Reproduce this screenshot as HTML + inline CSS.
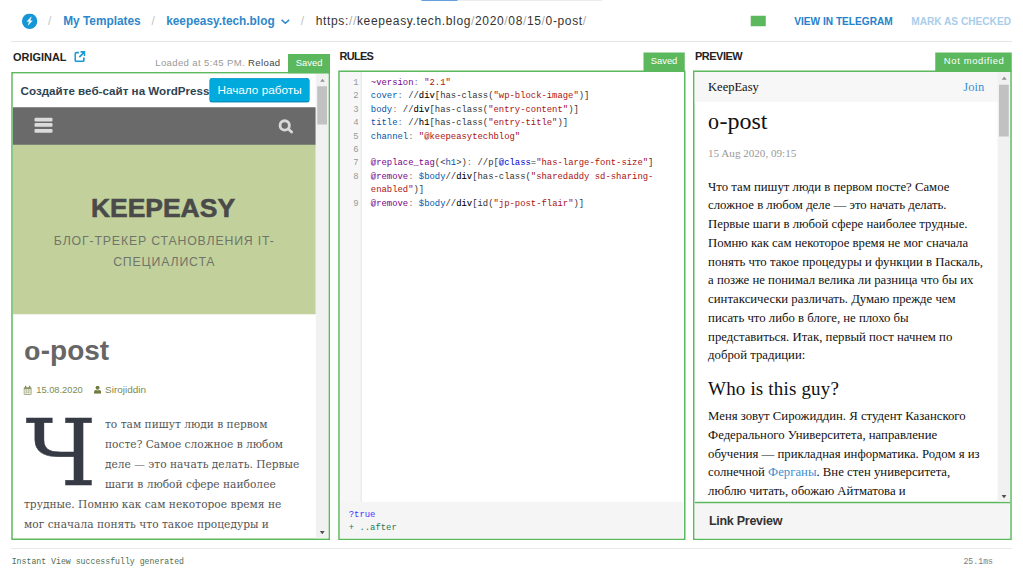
<!DOCTYPE html>
<html><head><meta charset="utf-8"><title>Instant View Editor</title>
<style>
html,body{margin:0;padding:0;background:#fff;overflow:hidden}
body{width:1023px;height:575px;position:relative}
#s{position:absolute;left:0;top:0;width:1364px;height:767px;transform:scale(0.75);transform-origin:0 0;font-family:"Liberation Sans",sans-serif;color:#222;overflow:hidden}
#s *{box-sizing:border-box}
.a{position:absolute;white-space:nowrap}
.hdrline{left:15px;top:54.6px;width:1334px;height:1.2px;background:#dcdcdc}
.bc{font-size:16px;line-height:20px;top:17.6px}
.bc.b{font-weight:bold;color:#2e87ca;font-size:15.8px}
.sep{color:#c4c4c4;font-size:16px;line-height:20px;top:17.6px}
.panel{border:2px solid #5cb85c;background:#fff;background-clip:padding-box;overflow:hidden}
.lbl{font-weight:bold;font-size:14.6px;line-height:16px;color:#222}
.badge{background:#5cb85c;color:#fff;font-size:13px;line-height:16px;text-align:center}
.ln{left:0;width:25.6px;text-align:right;font-family:"Liberation Mono",monospace;font-size:11.85px;line-height:18px;color:#999}
.cl{left:41.9px;font-family:"Liberation Mono",monospace;font-size:11.85px;line-height:18px;color:#333}
.cl b{color:#000;font-weight:normal;-webkit-text-stroke:0.12px #000}
.k{color:#770088}.v{color:#0055aa}.s{color:#aa1111}.o{color:#777}.at{color:#0000cc}
.iv{font-family:"Liberation Serif",serif;color:#111}
</style></head><body>
<div id="s">
<!-- header -->
<div class="a" style="left:562px;top:0;width:241px;height:1.3px;background:#e6e6e6"></div>
<div class="a" style="left:562px;top:0;width:48.2px;height:1.3px;background:#3a87d6"></div>
<svg class="a" style="left:29.45px;top:18.45px" width="21" height="21" viewBox="0 0 21 21"><circle cx="10.5" cy="10.4" r="10.3" fill="#1596d6"/><path d="M12.7 4.3 L6.9 10.8 H10.1 L8.5 15.8 L14.1 9.6 H11.1 Z" fill="#fff" stroke="#fff" stroke-width="0.5" stroke-linejoin="round"/></svg>
<div class="a sep" style="left:64px">/</div>
<div class="a bc b" id="bc1" style="left:84.3px">My Templates</div>
<div class="a sep" style="left:202px">/</div>
<div class="a bc b" id="bc2" style="left:221.6px">keepeasy.tech.blog</div>
<svg class="a" style="left:374px;top:25px" width="13" height="8" viewBox="0 0 13 8"><path d="M1.5 1.5 L6.5 6 L11.5 1.5" fill="none" stroke="#2e87ca" stroke-width="2"/></svg>
<div class="a sep" style="left:401px">/</div>
<div class="a bc" id="url" style="left:421px;color:#333;letter-spacing:0.86px">https:<span style="color:#aaa">//</span>keepeasy.tech.blog<span style="color:#aaa">/</span>2020<span style="color:#aaa">/</span>08<span style="color:#aaa">/</span>15<span style="color:#aaa">/</span>0-post<span style="color:#aaa">/</span></div>
<div class="a" style="left:1000.5px;top:21.3px;width:20px;height:14px;background:#5cb85c"></div>
<div class="a" style="left:1059px;top:20.3px;font-size:13.5px;line-height:18px;font-weight:bold;color:#2481cc">VIEW IN TELEGRAM</div>
<div class="a" style="left:1215px;top:20.3px;font-size:13.5px;line-height:18px;font-weight:bold;color:#a8cdea">MARK AS CHECKED</div>
<div class="a hdrline"></div>

<!-- labels -->
<div class="a lbl" id="l1" style="left:17.3px;top:67.8px">ORIGINAL</div>
<div class="a lbl" id="l2" style="left:452.6px;top:67.3px;letter-spacing:-0.9px">RULES</div>
<div class="a lbl" id="l3" style="left:926.5px;top:67.3px;letter-spacing:-0.6px">PREVIEW</div>

<div class="a badge" id="b1" style="left:384.3px;top:72px;width:55.7px;height:26px;padding-top:3.5px;font-size:12.5px">Saved</div>
<div class="a badge" id="b2" style="left:857.5px;top:69.7px;width:55.8px;height:26px;padding-top:3.3px;font-size:12.5px">Saved</div>
<div class="a badge" id="b3" style="left:1247px;top:69.7px;width:101.7px;height:26px;padding-top:3.3px;font-size:12.6px;letter-spacing:0.85px;padding-left:2px">Not modified</div>
<div class="a" id="ld" style="left:207px;top:75.6px;font-size:12.7px;line-height:16px;color:#999;letter-spacing:0.5px">Loaded at 5:45 PM. <span style="color:#444">Reload</span></div>
<svg class="a" id="ext" style="left:98.7px;top:67.6px" width="15" height="15" viewBox="0 0 15 15"><path d="M6.2 2.2 H2.8 Q1.2 2.2 1.2 3.8 V12.2 Q1.2 13.8 2.8 13.8 H11.2 Q12.8 13.8 12.8 12.2 V8.8" fill="none" stroke="#1a9ad7" stroke-width="2.3"/><path d="M8.4 1.2 H13.8 V6.6 M13.4 1.6 L6.8 8.2" fill="none" stroke="#1a9ad7" stroke-width="2.3"/></svg>
<!-- panels -->
<div class="a panel" id="p1" style="left:15.3px;top:96.4px;width:424.7px;height:624px">
<div class="a" style="left:0;top:0;width:404px;height:45.2px;background:#fff"></div>
<div class="a" id="wpt" style="left:10.2px;top:13px;font-size:15.5px;line-height:20px;font-weight:bold;color:#2e4453">Создайте веб-сайт на WordPress</div>
<div class="a" id="wpb" style="left:261.5px;top:5.3px;width:134.5px;height:33.5px;background:#00aadc;border-radius:4px;border:1px solid #0090c4;border-bottom:2px solid #0087b8;color:#fff;font-size:15.7px;line-height:30px;text-align:center">Начало работы</div>
<div class="a" style="left:0;top:45px;width:404px;height:50.2px;background:#6a6a6a"></div>
<div class="a" style="left:28.3px;top:58.4px;width:24.6px;height:5.1px;border-radius:1.5px;background:#dbdbdb"></div>
<div class="a" style="left:28.3px;top:65.9px;width:24.6px;height:5.1px;border-radius:1.5px;background:#dbdbdb"></div>
<div class="a" style="left:28.3px;top:73.5px;width:24.6px;height:5.1px;border-radius:1.5px;background:#dbdbdb"></div>
<svg class="a" style="left:352px;top:58.6px" width="24" height="24" viewBox="0 0 24 24"><circle cx="10.6" cy="10.2" r="6.2" fill="none" stroke="#d8d8d8" stroke-width="3.8"/><path d="M15.4 15 L19.8 19" stroke="#d8d8d8" stroke-width="3.9" stroke-linecap="round"/></svg>
<div class="a" style="left:0;top:94.7px;width:404px;height:225.7px;background:#c2d19b"></div>
<div class="a" id="ke" style="left:-2px;top:158.9px;width:404px;text-align:center;font-size:35.3px;line-height:40px;font-weight:bold;color:#4a4a4a;letter-spacing:0;-webkit-text-stroke:0.8px #4a4a4a">KEEPEASY</div>
<div class="a" id="sub" style="left:-0.3px;top:209.6px;width:404px;text-align:center;font-size:16.4px;line-height:27.5px;color:#70746a;letter-spacing:1.12px">БЛОГ-ТРЕКЕР СТАНОВЛЕНИЯ IT-<br>СПЕЦИАЛИСТА</div>
<div class="a" id="pt" style="left:14.5px;top:347px;font-size:37.3px;line-height:44px;font-weight:bold;color:#666"><span id="z0" style="display:inline-block;font-size:27.4px;transform:scaleX(1.45);transform-origin:0 100%;width:22.6px">0</span>-post</div>
<div class="a" id="meta" style="left:31px;top:414px;font-size:12.4px;line-height:16px;color:#7d8b4e">15.08.2020</div>
<div class="a" id="meta2" style="left:122.8px;top:414px;font-size:13.3px;line-height:16px;color:#7d8b4e">Sirojiddin</div>
<svg class="a" style="left:14px;top:415.6px" width="11.6" height="13" viewBox="0 0 12 13"><rect x="0.6" y="2.1" width="10.8" height="10.3" rx="1" fill="#8d9964"/><path d="M1.6 5 H10.4 V11.4 H1.6 Z" fill="#f2f4ec"/><path d="M4.5 5 V11.4 M7.5 5 V11.4 M1.6 7.1 H10.4 M1.6 9.3 H10.4" stroke="#a9b28a" stroke-width="0.7"/><path d="M3.3 0.6 V3 M8.7 0.6 V3" stroke="#7d8b4e" stroke-width="1.7" stroke-linecap="round"/></svg>
<svg class="a" style="left:107.6px;top:415.6px" width="10.2" height="11.4" viewBox="0 0 11 12"><circle cx="5.5" cy="3.1" r="2.9" fill="#6f7c40"/><path d="M0.4 11.6 V9.2 Q0.4 6.4 3.2 6.2 Q5.5 7.6 7.8 6.2 Q10.6 6.4 10.6 9.2 V11.6 Z" fill="#6f7c40"/></svg>
<div class="a" id="dc" style="left:16.7px;top:431.8px;transform:scaleX(1.0);transform-origin:0 0;font-family:'DejaVu Serif','Liberation Serif',serif;font-size:122px;line-height:150px;color:#353a44;-webkit-text-stroke:0.6px #353a44">Ч</div>
<div class="a" id="para" style="left:14.7px;top:453.3px;font-family:'DejaVu Serif','Liberation Serif',serif;font-size:14.2px;line-height:26.9px;color:#555"><span style="margin-left:108px">то там пишут люди в первом</span><br><span style="margin-left:108px">посте? Самое сложное в любом</span><br><span style="margin-left:108px">деле — это начать делать. Первые</span><br><span style="margin-left:108px">шаги в любой сфере наиболее</span><br>трудные. Помню как сам некоторое время не<br>мог сначала понять что такое процедуры и</div>
<!-- scrollbar -->
<div class="a" style="left:404px;top:0;width:16.7px;height:620px;background:#f1f1f1"></div>
<div class="a" style="left:405.9px;top:16.8px;width:12.7px;height:51.2px;background:#c1c1c1"></div>
<svg class="a" style="left:408.4px;top:6.6px" width="8" height="4.4" viewBox="0 0 9 6"><path d="M0 6 L4.5 0 L9 6 Z" fill="#8e9196"/></svg>
<svg class="a" style="left:408.8px;top:609.2px" width="7.4" height="4.4" viewBox="0 0 9 6"><path d="M0 0 L4.5 6 L9 0 Z" fill="#505050"/></svg>
</div>
<div class="a panel" id="p2" style="left:450.6px;top:93.7px;width:463px;height:626.7px">
<div class="a" style="left:0;top:0;width:29.8px;height:574px;background:#f7f7f7;border-right:1.2px solid #ddd"></div>
<div class="a ln" style="top:5.20px">1</div><div class="a cl" style="top:5.20px"><span class="k">~version</span><span class="o">:</span> <span class="s">"2.1"</span></div>
<div class="a ln" style="top:23.12px">2</div><div class="a cl" style="top:23.12px"><span class="v">cover</span><span class="o">:</span> //<b>div</b>[has-class(<span class="s">"wp-block-image"</span>)]</div>
<div class="a ln" style="top:41.04px">3</div><div class="a cl" style="top:41.04px"><span class="v">body</span><span class="o">:</span> //<b>div</b>[has-class(<span class="s">"entry-content"</span>)]</div>
<div class="a ln" style="top:58.96px">4</div><div class="a cl" style="top:58.96px"><span class="v">title</span><span class="o">:</span> //<b>h1</b>[has-class(<span class="s">"entry-title"</span>)]</div>
<div class="a ln" style="top:76.88px">5</div><div class="a cl" style="top:76.88px"><span class="v">channel</span><span class="o">:</span> <span class="s">"@keepeasytechblog"</span></div>
<div class="a ln" style="top:94.80px">6</div><div class="a cl" style="top:94.80px"></div>
<div class="a ln" style="top:112.72px">7</div><div class="a cl" style="top:112.72px"><span class="k">@replace_tag</span>(&lt;<span class="v">h1</span>&gt;)<span class="o">:</span> //p[<span class="at">@class</span>=<span class="s">"has-large-font-size"</span>]</div>
<div class="a ln" style="top:130.64px">8</div><div class="a cl" style="top:130.64px"><span class="k">@remove</span><span class="o">:</span> <span class="v">$body</span>//<b>div</b>[has-class(<span class="s">"sharedaddy sd-sharing-</span></div>
<div class="a cl" style="top:148.56px"><span class="s">enabled"</span>)]</div>
<div class="a ln" style="top:166.48px">9</div><div class="a cl" style="top:166.48px"><span class="k">@remove</span><span class="o">:</span> <span class="v">$body</span>//<b>div</b>[id(<span class="s">"jp-post-flair"</span>)]</div>
<div class="a" id="dbg" style="left:0;top:573.5px;width:458.7px;height:50px;background:#f5f5f5"></div>
<div class="a cl" id="d1" style="left:12.4px;top:581.5px;color:#3a3aff">?true</div>
<div class="a cl" id="d2" style="left:12.4px;top:599.5px;color:#1a7a55">+ ..after</div>
</div>
<div class="a panel" id="p3" style="left:924px;top:93.7px;width:424.7px;height:626.7px">
<div class="a" style="left:0;top:0;width:405px;height:40.4px;background:#f7f7f7"></div>
<div class="a iv" id="ivc" style="left:18.1px;top:9.9px;font-size:16.7px;line-height:20px">KeepEasy</div>
<div class="a iv" id="ivj" style="left:358.4px;top:9.9px;font-size:16.7px;line-height:20px;color:#3a8fd0">Join</div>
<div class="a iv" id="ivt" style="left:18.1px;top:45.2px;font-size:32px;line-height:40px"><span id="z1" style="display:inline-block;font-size:22.6px;transform:scaleX(1.3);transform-origin:0 100%;width:15.2px">0</span>-post</div>
<div class="a iv" id="ivd" style="left:18.1px;top:99px;font-size:14.8px;line-height:18px;color:#999">15 Aug 2020, 09:15</div>
<div class="a iv" id="ivb1" style="left:18.1px;top:140px;font-size:17px;line-height:25px">Что там пишут люди в первом посте? Самое<br>сложное в любом деле — это начать делать.<br>Первые шаги в любой сфере наиболее трудные.<br>Помню как сам некоторое время не мог сначала<br>понять что такое процедуры и функции в Паскаль,<br>а позже не понимал велика ли разница что бы их<br>синтаксически различать. Думаю прежде чем<br>писать что либо в блоге, не плохо бы<br>представиться. Итак, первый пост начнем по<br>доброй традиции:</div>
<div class="a iv" id="ivh" style="left:18.1px;top:406.9px;font-size:25.3px;line-height:30px;letter-spacing:0.24px">Who is this guy?</div>
<div class="a iv" id="ivb2" style="left:18.1px;top:446.5px;font-size:17px;line-height:25px">Меня зовут Сирожиддин. Я студент Казанского<br>Федерального Университета, направление<br>обучения — прикладная информатика. Родом я из<br>солнечной <span style="color:#3a8fd0">Ферганы</span>. Вне стен университета,<br>люблю читать, обожаю Айтматова и<br>Достоевского, слушаю рок и играю в футбол.</div>
<div class="a" style="left:0;top:573.6px;width:420.7px;height:60px;background:#f5f5f5;border-top:2.3px solid #5cb85c"></div>
<div class="a" id="lp" style="left:19.2px;top:589.5px;font-size:16.7px;line-height:20px;font-weight:bold;color:#333;letter-spacing:-0.36px">Link Preview</div>
<!-- scrollbar -->
<div class="a" style="left:404.4px;top:0;width:16.7px;height:573.4px;background:#f1f1f1"></div>
<div class="a" style="left:405.9px;top:17px;width:13px;height:69.5px;background:#c1c1c1"></div>
<svg class="a" style="left:408.6px;top:6.8px" width="8" height="4.4" viewBox="0 0 9 6"><path d="M0 6 L4.5 0 L9 6 Z" fill="#8e9196"/></svg>
<svg class="a" style="left:409px;top:564.2px" width="7.4" height="4.4" viewBox="0 0 9 6"><path d="M0 0 L4.5 6 L9 0 Z" fill="#505050"/></svg>
</div>

<!-- footer -->
<div class="a" style="left:15px;top:730.6px;width:1334px;height:1.2px;background:#e0e0e0"></div>
<div class="a" id="f1" style="left:15.6px;top:742.2px;font-family:'Liberation Mono',monospace;font-size:10.95px;line-height:14px;color:#4d6e4f">Instant View successfully generated</div>
<div class="a" id="f2" style="left:1284.6px;top:742.4px;font-family:'Liberation Mono',monospace;font-size:10.95px;line-height:14px;color:#777c82">25.1ms</div>
</div>
</body></html>
